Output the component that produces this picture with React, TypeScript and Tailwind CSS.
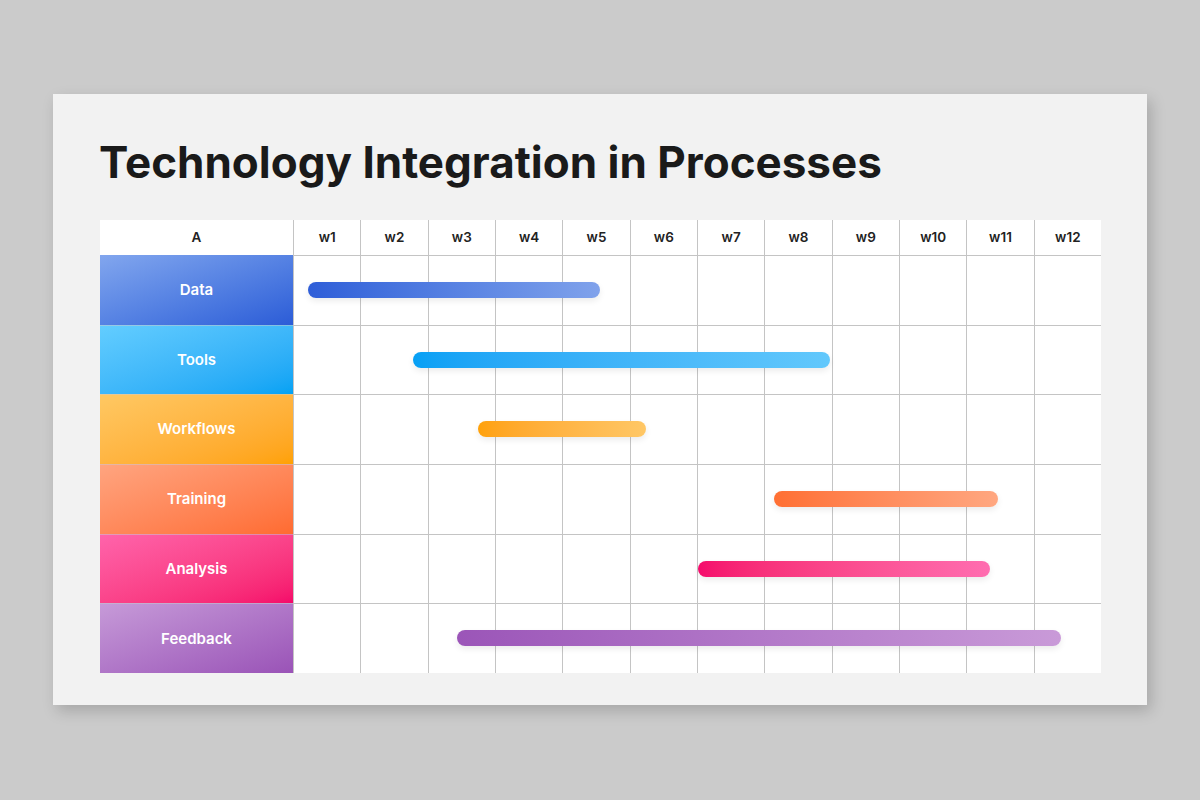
import React from 'react';

interface Task {
  name: string;
  label: string;
  bar: string;
  left: number;
  width: number;
}

const weeks = ['w1', 'w2', 'w3', 'w4', 'w5', 'w6', 'w7', 'w8', 'w9', 'w10', 'w11', 'w12'];

// bar offsets are measured from the left edge of the week grid
const tasks: Task[] = [
  {
    name: 'Data',
    label: 'bg-gradient-to-br from-[#82a6ee] to-[#2c5cd7]',
    bar: 'bg-gradient-to-r from-[#2f5ed8] to-[#80a2eb]',
    left: 15,
    width: 292,
  },
  {
    name: 'Tools',
    label: 'bg-gradient-to-br from-[#62cdff] to-[#00a2f4]',
    bar: 'bg-gradient-to-r from-[#06a0f5] to-[#62c8fc]',
    left: 120,
    width: 417,
  },
  {
    name: 'Workflows',
    label: 'bg-gradient-to-br from-[#ffc862] to-[#ffa100]',
    bar: 'bg-gradient-to-r from-[#ffa108] to-[#ffc765]',
    left: 185,
    width: 168,
  },
  {
    name: 'Training',
    label: 'bg-gradient-to-br from-[#ffa47f] to-[#ff6b30]',
    bar: 'bg-gradient-to-r from-[#ff6f32] to-[#ffa780]',
    left: 481,
    width: 224,
  },
  {
    name: 'Analysis',
    label: 'bg-gradient-to-br from-[#ff63ab] to-[#f5066a]',
    bar: 'bg-gradient-to-r from-[#f50a6c] to-[#ff6db0]',
    left: 405,
    width: 292,
  },
  {
    name: 'Feedback',
    label: 'bg-gradient-to-br from-[#c69ad8] to-[#9a53b7]',
    bar: 'bg-gradient-to-r from-[#9b55b8] to-[#c99ad8]',
    left: 164,
    width: 604,
  },
];

const App: React.FC = () => {
  return (
    <div
      className="min-h-[800px] w-full bg-[#cbcbcb] pt-[94px]"
      style={{ fontFamily: 'Inter, "Open Sans", sans-serif' }}
    >
      <div className="mx-[53px] h-[611px] bg-[#f2f2f2] pl-[46px] pr-[46px] pt-[46px] shadow-[4px_6px_14px_rgba(0,0,0,0.18)]">
        {/* Title */}
        <h1 className="text-[44px] leading-[44px] font-bold text-[#1a1a1a]">
          Technology Integration in Processes
        </h1>

        {/* Gantt table */}
        <div className="ml-px mt-[36px] w-[1001px] bg-white">
          {/* Header row */}
          <div className="grid h-[35px] grid-cols-[193px_repeat(12,1fr)]">
            <div className="flex items-center justify-center text-[13.5px] font-semibold text-[#222]">
              A
            </div>
            {weeks.map((w) => (
              <div
                key={w}
                className="flex items-center justify-center border-l border-[#c4c4c4] text-[13.5px] font-semibold text-[#222]"
              >
                {w}
              </div>
            ))}
          </div>

          {/* Task rows */}
          {tasks.map((task, i) => (
            <div key={task.name} className="grid h-[69.7px] grid-cols-[193px_1fr]">
              <div
                className={`flex items-center justify-center text-[15px] font-semibold text-white ${task.label} ${
                  i > 0 ? 'border-t border-[#d6d6d6]/60' : ''
                }`}
              >
                {task.name}
              </div>
              <div className="relative grid grid-cols-12">
                {weeks.map((w) => (
                  <div key={w} className="border-l border-t border-[#c4c4c4]" />
                ))}
                <div
                  className={`absolute top-1/2 h-4 -translate-y-1/2 rounded-full shadow-[0_3px_6px_rgba(0,0,0,0.08)] ${task.bar}`}
                  style={{ left: task.left, width: task.width }}
                />
              </div>
            </div>
          ))}
        </div>
      </div>
    </div>
  );
};

export default App;
